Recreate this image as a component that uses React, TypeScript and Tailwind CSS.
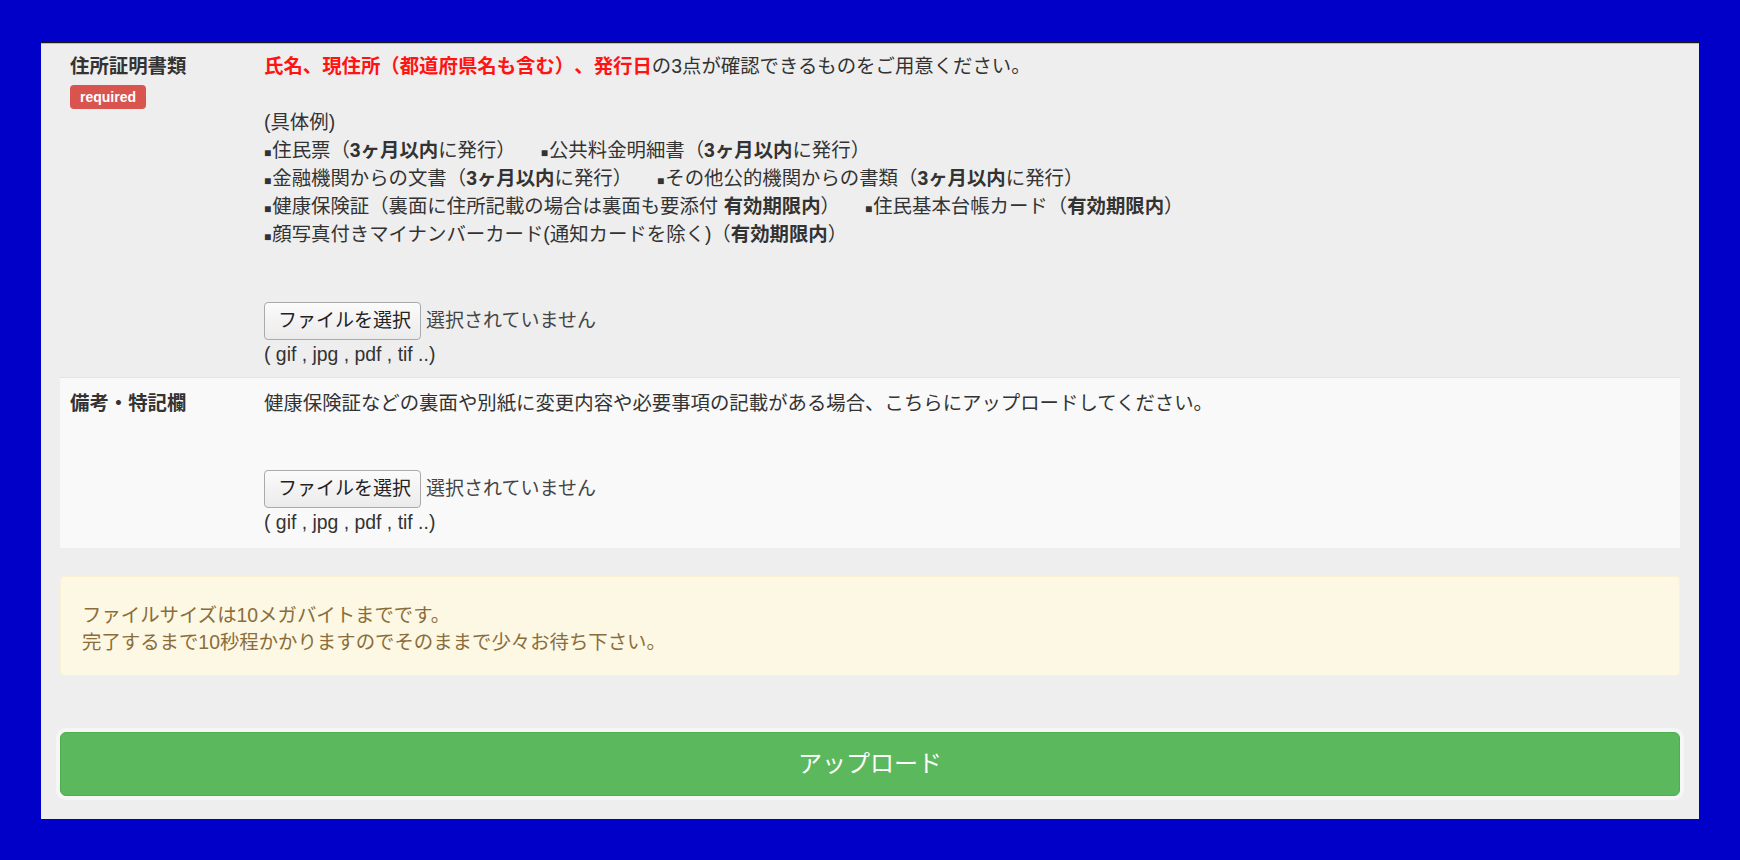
import React from 'react'

const Sq = () => <span className="text-[12px] leading-none mr-[1px]">■</span>

const examples = [
  [
    <>住民票（<b>3ヶ月以内</b>に発行）</>,
    <>公共料金明細書（<b>3ヶ月以内</b>に発行）</>,
  ],
  [
    <>金融機関からの文書（<b>3ヶ月以内</b>に発行）</>,
    <>その他公的機関からの書類（<b>3ヶ月以内</b>に発行）</>,
  ],
  [
    <>健康保険証（裏面に住所記載の場合は裏面も要添付 <b>有効期限内</b>）</>,
    <>住民基本台帳カード（<b>有効期限内</b>）</>,
  ],
  [<>顔写真付きマイナンバーカード(通知カードを除く)（<b>有効期限内</b>）</>],
]

function FilePicker({ className = '' }: { className?: string }) {
  return (
    <div className={className}>
      <div className="flex items-center text-[19px]">
        <span className="h-[38px] pl-[13px] pr-[9px] flex items-center rounded-[4px] border border-[#aaaaaa] bg-linear-to-b from-[#fbfbfb] to-[#ebebeb] text-[#222]">
          ファイルを選択
        </span>
        <span className="ml-[5px] text-[#444]">選択されていません</span>
      </div>
      <p>( gif , jpg , pdf , tif ..)</p>
    </div>
  )
}

export default function App() {
  return (
    <div className="min-h-screen bg-[#0000c8] px-[41px] pt-[42px] font-['Liberation_Sans','Noto_Sans_CJK_JP',sans-serif] text-[19.4px] leading-[28px] text-[#333] [text-spacing-trim:space-all]">
      <div className="bg-[#eeeeee] border-t border-[#1a1a1a] shadow-[inset_0_1px_0_#bdbdbd] px-[19px] pb-[23px]">
        {/* 住所証明書類 */}
        <div className="grid grid-cols-[194px_1fr] px-[10px] pt-[9px] pb-[9px]">
          <div className="flex flex-col items-start">
            <p className="font-bold">住所証明書類</p>
            <span className="mt-[5px] h-[24px] px-[10px] flex items-center rounded-[4px] bg-[#d9534f] text-white text-[14px] font-bold leading-none">
              required
            </span>
          </div>
          <div>
            <p>
              <b className="text-[#ff1414]">氏名、現住所（都道府県名も含む）、発行日</b>
              の3点が確認できるものをご用意ください。
            </p>
            <p className="mt-[28px]">(具体例)</p>
            {examples.map((line, i) => (
              <p key={i}>
                {line.map((item, j) => (
                  <span key={j} className={j > 0 ? 'ml-[25px]' : ''}>
                    <Sq />
                    {item}
                  </span>
                ))}
              </p>
            ))}
            <FilePicker className="mt-[54px]" />
          </div>
        </div>

        {/* 備考・特記欄 */}
        <div className="grid grid-cols-[194px_1fr] px-[10px] pt-[11px] pb-[12px] bg-[#f9f9f9] border-t border-[#e4e4e4]">
          <p className="font-bold">備考・特記欄</p>
          <div>
            <p>健康保険証などの裏面や別紙に変更内容や必要事項の記載がある場合、こちらにアップロードしてください。</p>
            <FilePicker className="mt-[53px]" />
          </div>
        </div>

        {/* notice */}
        <div className="mt-[28px] rounded-[4px] border border-[#faf0d4] bg-[#fcf8e3] pl-[21px] pt-[25px] pb-[19px] text-[#8a6d3b] leading-[27px]">
          <p>ファイルサイズは10メガバイトまでです。</p>
          <p>完了するまで10秒程かかりますのでそのままで少々お待ち下さい。</p>
        </div>

        <button className="mt-[56px] w-full h-[64px] rounded-[6px] bg-[#5cb85c] border border-[#4cae4c] text-white text-[24px] shadow-[0_0_0_4px_rgba(255,255,255,0.45)]">
          アップロード
        </button>
      </div>
    </div>
  )
}
